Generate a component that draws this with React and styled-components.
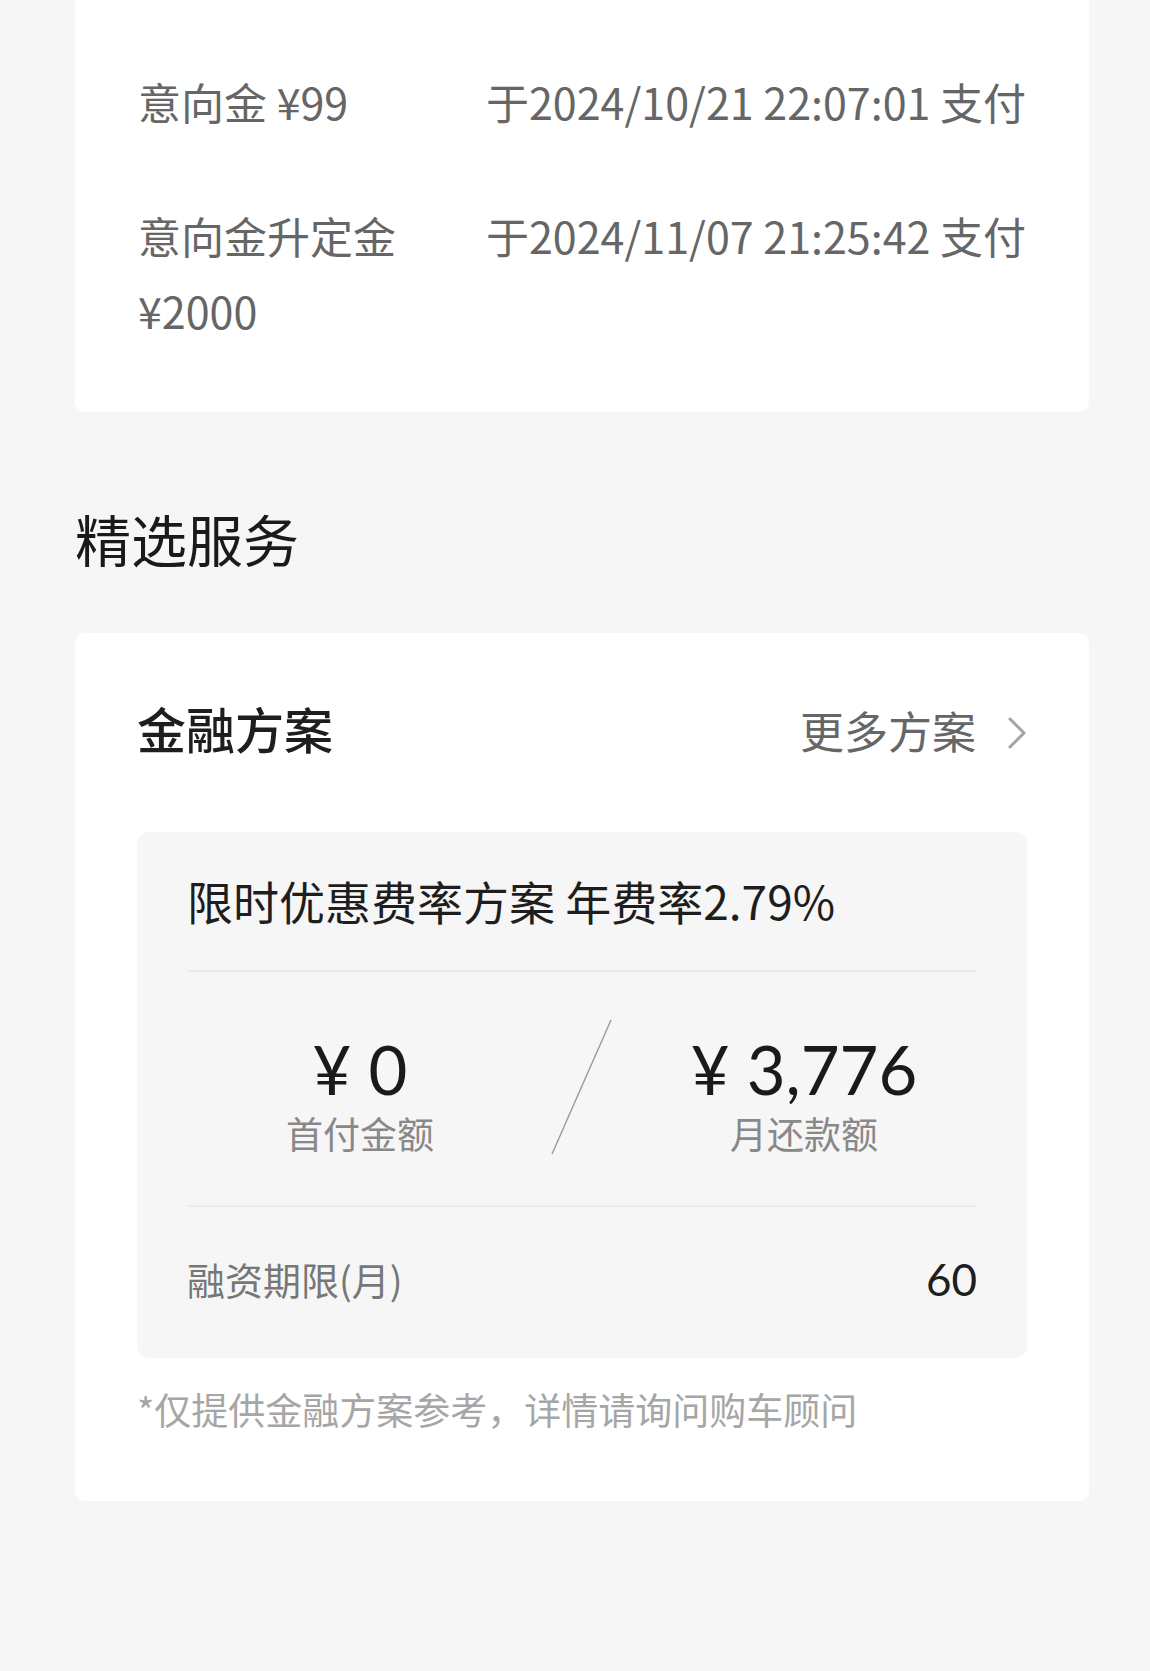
import React from "react";
import styled, { createGlobalStyle } from "styled-components";

const GlobalStyle = createGlobalStyle`
  html, body {
    margin: 0;
    padding: 0;
    background: #f6f6f6;
  }
  body {
    font-family: "Noto Sans CJK SC", "Noto Sans", sans-serif;
    -webkit-font-smoothing: antialiased;
  }
  * { box-sizing: border-box; }
`;

const Page = styled.div`
  min-height: 1671px;
  padding: 0 61px 0 75px;
  display: flex;
  flex-direction: column;
`;

const Card = styled.section`
  background: #ffffff;
  border-radius: ${(p) => (p.$clipTop ? "0 0 10px 10px" : "10px")};
  padding: ${(p) => p.$padding};
  display: flex;
  flex-direction: column;
`;

const PayList = styled.div`
  display: flex;
  flex-direction: column;
  gap: 59px;
  padding: 0 63px;
`;

const PayRow = styled.div`
  display: flex;
  align-items: flex-start;
  font-size: 43px;
  line-height: 75px;
  color: #666666;
`;

const PayLabel = styled.div`
  flex: 0 0 300px;
`;

const PayTime = styled.div`
  flex: 1;
  text-align: right;
  white-space: nowrap;
`;

const SectionTitle = styled.h2`
  margin: 86px 0 55px;
  font-size: 56px;
  line-height: 80px;
  font-weight: 400;
  color: #1a1a1a;
`;

const CardHeader = styled.div`
  display: flex;
  align-items: center;
  justify-content: space-between;
  height: 80px;
`;

const CardTitle = styled.div`
  font-size: 49px;
  font-weight: 500;
  color: #1e1e1e;
  line-height: 80px;
`;

const MoreLink = styled.div`
  display: flex;
  align-items: center;
  gap: 31px;
  font-size: 44px;
  color: #666666;
  line-height: 80px;
  padding-top: 3px;

  svg {
    margin-top: 6px;
  }
`;

const Plan = styled.div`
  margin-top: 64px;
  background: #f6f6f6;
  border-radius: 12px;
  padding: 0 50px;
  display: flex;
  flex-direction: column;
`;

const PlanTitle = styled.div`
  padding: 33px 0 35px;
  font-size: 46px;
  line-height: 70px;
  color: #1e1e1e;
  border-bottom: 2px solid #ebebeb;
`;

const Amounts = styled.div`
  display: grid;
  grid-template-columns: 1fr 98px 1fr;
  align-items: start;
  padding: 48px 0 48px;
  border-bottom: 2px solid #ebebeb;
`;

const AmountCol = styled.div`
  display: flex;
  flex-direction: column;
  align-items: center;
  padding-top: 9px;
`;

const AmountValue = styled.div`
  font-family: "Lato", "Noto Sans", sans-serif;
  font-size: 67px;
  line-height: 80px;
  color: #1a1a1a;
  white-space: pre;
`;

const AmountLabel = styled.div`
  font-size: 37px;
  line-height: 48px;
  color: #888888;
`;

const Slash = styled.svg`
  display: block;
  width: 98px;
  height: 134px;
`;

const TermRow = styled.div`
  display: flex;
  justify-content: space-between;
  align-items: center;
  padding: 42px 0 49px;
  line-height: 60px;
`;

const TermLabel = styled.div`
  font-size: 38px;
  color: #777777;
`;

const TermValue = styled.div`
  font-family: "Lato", "Noto Sans", sans-serif;
  font-size: 44px;
  color: #1e1e1e;
`;

const Note = styled.p`
  margin: 26px 0 0;
  font-size: 37px;
  line-height: 50px;
  color: #a6a6a6;
`;

const Chevron = () => (
  <svg width="20" height="32" viewBox="0 0 20 32" fill="none">
    <polyline
      points="3,2 17,16 3,30"
      stroke="#a3a3a3"
      strokeWidth="3"
      strokeLinecap="round"
      strokeLinejoin="round"
    />
  </svg>
);

const payments = [
  { label: "意向金 ¥99", time: "于2024/10/21 22:07:01 支付" },
  { label: "意向金升定金 ¥2000", time: "于2024/11/07 21:25:42 支付" },
];

export default function App() {
  return (
    <>
      <GlobalStyle />
      <Page>
        <Card $clipTop $padding="64px 0 64px">
          <PayList>
            {payments.map((p) => (
              <PayRow key={p.time}>
                <PayLabel>{p.label}</PayLabel>
                <PayTime>{p.time}</PayTime>
              </PayRow>
            ))}
          </PayList>
        </Card>

        <SectionTitle>精选服务</SectionTitle>

        <Card $padding="55px 62px 67px">
          <CardHeader>
            <CardTitle>金融方案</CardTitle>
            <MoreLink>
              更多方案
              <Chevron />
            </MoreLink>
          </CardHeader>

          <Plan>
            <PlanTitle>限时优惠费率方案 年费率2.79%</PlanTitle>
            <Amounts>
              <AmountCol>
                <AmountValue>¥ 0</AmountValue>
                <AmountLabel>首付金额</AmountLabel>
              </AmountCol>
              <Slash viewBox="0 0 98 134">
                <line x1="78" y1="0" x2="19" y2="134" stroke="#9a9a9a" strokeWidth="1.4" />
              </Slash>
              <AmountCol>
                <AmountValue>¥ 3,776</AmountValue>
                <AmountLabel>月还款额</AmountLabel>
              </AmountCol>
            </Amounts>
            <TermRow>
              <TermLabel>融资期限(月)</TermLabel>
              <TermValue>60</TermValue>
            </TermRow>
          </Plan>

          <Note>*仅提供金融方案参考，详情请询问购车顾问</Note>
        </Card>
      </Page>
    </>
  );
}
